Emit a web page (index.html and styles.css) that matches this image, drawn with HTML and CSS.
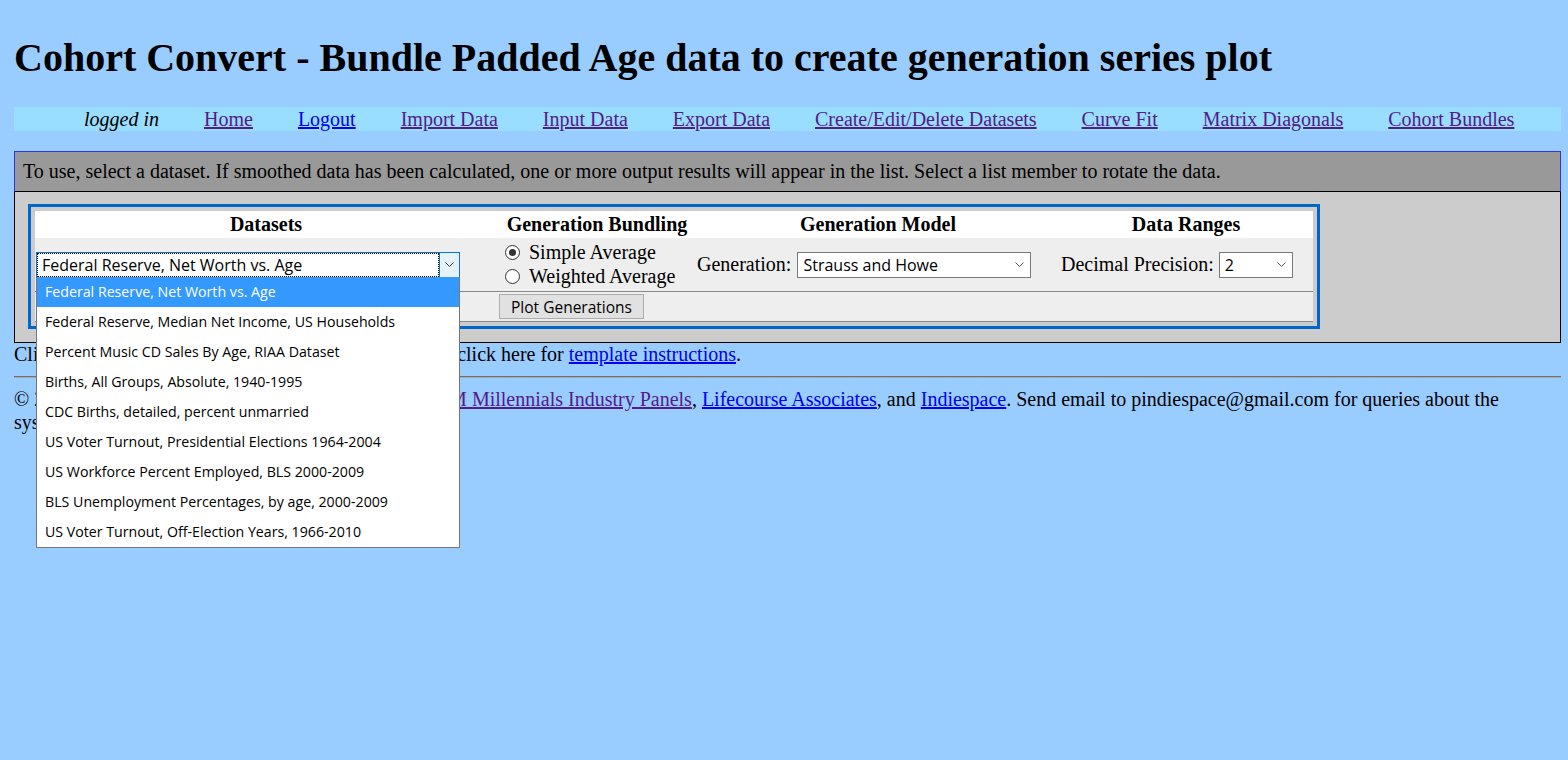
FILE: index.html
```html
<!DOCTYPE html>
<html>
<head>
<meta charset="utf-8">
<title>Cohort Convert</title>
<link rel="stylesheet" href="styles.css">
</head>
<body>
<div class="page">
  <h1 class="title">Cohort Convert - Bundle Padded Age data to create generation series plot</h1>

  <div class="nav">
    <i class="who">logged in</i>
    <a href="#" class="visited">Home</a>
    <a href="#" class="link">Logout</a>
    <a href="#" class="visited">Import Data</a>
    <a href="#" class="visited">Input Data</a>
    <a href="#" class="visited">Export Data</a>
    <a href="#" class="visited">Create/Edit/Delete Datasets</a>
    <a href="#" class="visited">Curve Fit</a>
    <a href="#" class="visited">Matrix Diagonals</a>
    <a href="#" class="visited">Cohort Bundles</a>
  </div>

  <div class="panel">
    <div class="panel-head">To use, select a dataset. If smoothed data has been calculated, one or more output results will appear in the list. Select a list member to rotate the data.</div>
    <div class="panel-body">
      <div class="formbox">
        <div class="grid-row hdr">
          <div class="th">Datasets</div>
          <div class="th">Generation Bundling</div>
          <div class="th">Generation Model</div>
          <div class="th">Data Ranges</div>
        </div>
        <div class="grid-row ctl">
          <div class="cell c1">
            <div class="select open">
              <div class="focusbox">Federal Reserve, Net Worth vs. Age</div>
              <div class="arrowbox">
                <svg width="9" height="5" viewBox="0 0 9 5"><path d="M0.5 0.5 L4.5 4.5 L8.5 0.5" fill="none" stroke="#333" stroke-width="1"/></svg>
              </div>
              <div class="listbox">
                <div class="opt selected">Federal Reserve, Net Worth vs. Age</div>
                <div class="opt">Federal Reserve, Median Net Income, US Households</div>
                <div class="opt">Percent Music CD Sales By Age, RIAA Dataset</div>
                <div class="opt">Births, All Groups, Absolute, 1940-1995</div>
                <div class="opt">CDC Births, detailed, percent unmarried</div>
                <div class="opt">US Voter Turnout, Presidential Elections 1964-2004</div>
                <div class="opt">US Workforce Percent Employed, BLS 2000-2009</div>
                <div class="opt">BLS Unemployment Percentages, by age, 2000-2009</div>
                <div class="opt">US Voter Turnout, Off-Election Years, 1966-2010</div>
              </div>
            </div>
          </div>
          <div class="cell c2">
            <div class="radios">
              <label class="radio-line"><span class="radio checked"></span>Simple Average</label>
              <label class="radio-line"><span class="radio"></span>Weighted Average</label>
            </div>
          </div>
          <div class="cell c3">
            <span class="lbl">Generation:</span>
            <div class="select gen">
              <span class="seltext">Strauss and Howe</span>
              <svg class="chev" width="9" height="5" viewBox="0 0 9 5"><path d="M0.5 0.5 L4.5 4.5 L8.5 0.5" fill="none" stroke="#555" stroke-width="1"/></svg>
            </div>
          </div>
          <div class="cell c4">
            <span class="lbl">Decimal Precision:</span>
            <div class="select prec">
              <span class="seltext">2</span>
              <svg class="chev" width="9" height="5" viewBox="0 0 9 5"><path d="M0.5 0.5 L4.5 4.5 L8.5 0.5" fill="none" stroke="#555" stroke-width="1"/></svg>
            </div>
          </div>
        </div>
        <div class="grid-row act">
          <div class="cell"></div>
          <div class="cell c2b"><button class="btn" type="button">Plot Generations</button></div>
          <div class="cell"></div>
          <div class="cell"></div>
        </div>
      </div>
    </div>
  </div>

  <p class="note">Click here to download a data template spreadsheet, or click here for <a href="#" class="link">template instructions</a>.</p>
  <hr class="rule">
  <p class="foot">&copy; 2010 Peter Markiewicz. Supported in part by the <a href="#" class="visited">IBM Millennials Industry Panels</a>, <a href="#" class="link">Lifecourse Associates</a>, and <a href="#" class="link">Indiespace</a>. Send email to pindiespace@gmail.com for queries about the system.</p>
</div>
</body>
</html>
```

FILE: styles.css
```css
html, body {
  margin: 0;
  padding: 0;
  background: #99ccff;
}
body {
  font-family: "Liberation Serif", "Times New Roman", serif;
  font-size: 20px;
  color: #000;
}
.page {
  box-sizing: border-box;
  min-height: 760px;
  padding: 8px 7px 8px 14px;
}
.title {
  font-size: 40px;
  font-weight: bold;
  line-height: 46px;
  margin: 27px 0 26px 0;
}
.visited { color: #551a8b; }
.link { color: #0000ee; }

.nav {
  display: flex;
  gap: 45px;
  height: 24px;
  line-height: 24px;
  padding-left: 70px;
  background: #99ddff;
  margin-bottom: 20px;
}

.panel-head {
  background: #999999;
  border: 1px solid #3333ee;
  border-bottom: 1px solid #000;
  padding: 8px 8px;
  line-height: 23px;
}
.panel-body {
  background: #cccccc;
  border: 1px solid #000;
  border-top: none;
  padding: 12px 13px 13px 13px;
}
.formbox {
  width: 1278px;
  border: 3px solid #0066cc;
  padding: 4px;
  background: #cccccc;
}
.grid-row {
  display: grid;
  grid-template-columns: 462px 200px 362px 254px;
}
.hdr {
  height: 27px;
  background: #ffffff;
}
.th {
  text-align: center;
  font-weight: bold;
  line-height: 27px;
}
.ctl {
  height: 53px;
  background: #eeeeee;
  border-bottom: 1px solid #888;
  position: relative;
  z-index: 5;
}
.act {
  height: 29px;
  background: #eeeeee;
  border-bottom: 1px solid #888;
}
.cell {
  display: flex;
  align-items: center;
}
.c1 { padding-left: 1px; }
.c2 { padding-left: 2px; }
.c3 { padding-left: 0; }
.c4 { padding-left: 2px; }
.c2b { padding-left: 2px; }

.select {
  position: relative;
  box-sizing: border-box;
  height: 26px;
  background: #fff;
  border: 1px solid #7a7a7a;
  font-family: "Open Sans", "Noto Sans", sans-serif;
  font-size: 16px;
  display: flex;
  align-items: center;
}
.select.open {
  width: 424px;
  border-color: #0078d7;
  align-items: stretch;
}
.focusbox {
  flex: 1;
  margin: 0;
  border: 1px dotted #000;
  padding-left: 4px;
  line-height: 22px;
  white-space: nowrap;
}
.arrowbox {
  width: 19px;
  background: #e5f1fb;
  border-left: 1px solid #0078d7;
  display: flex;
  align-items: center;
  justify-content: center;
}
.listbox {
  position: absolute;
  top: 100%;
  left: -1px;
  width: 424px;
  box-sizing: border-box;
  background: #fff;
  border: 1px solid #767676;
  border-top: none;
  z-index: 10;
  font-size: 14.2px;
}
.opt {
  height: 30px;
  line-height: 30px;
  padding-left: 8px;
  white-space: nowrap;
  color: #000;
}
.opt.selected {
  background: #3399ff;
  color: #fff;
}
.select.gen {
  width: 234px;
  margin-left: 6px;
}
.select.prec {
  width: 74px;
  margin-left: 5px;
}
.seltext {
  padding-left: 5px;
  flex: 1;
  white-space: nowrap;
}
.chev {
  margin-right: 6px;
}

.radios {
  display: flex;
  flex-direction: column;
}
.radio-line {
  display: flex;
  align-items: center;
  height: 24px;
  white-space: nowrap;
}
.radio {
  box-sizing: border-box;
  width: 15px;
  height: 15px;
  border: 1px solid #333;
  border-radius: 50%;
  background: #fff;
  margin-left: 6px;
  margin-right: 9px;
  position: relative;
}
.radio.checked::after {
  content: "";
  position: absolute;
  left: 3px;
  top: 3px;
  width: 7px;
  height: 7px;
  border-radius: 50%;
  background: #333;
}

.btn {
  box-sizing: border-box;
  width: 145px;
  height: 25px;
  padding: 0;
  background: #e1e1e1;
  border: 1px solid #adadad;
  font-family: "Open Sans", "Noto Sans", sans-serif;
  font-size: 15.5px;
  color: #000;
}

.note {
  margin: 0;
  line-height: 23px;
}
.rule {
  height: 0;
  margin: 10px 0 10px 0;
  border: none;
  border-top: 1px solid #707070;
  border-bottom: 1px solid #a9a9a9;
}
.foot {
  margin: 0;
  line-height: 23px;
}
```
